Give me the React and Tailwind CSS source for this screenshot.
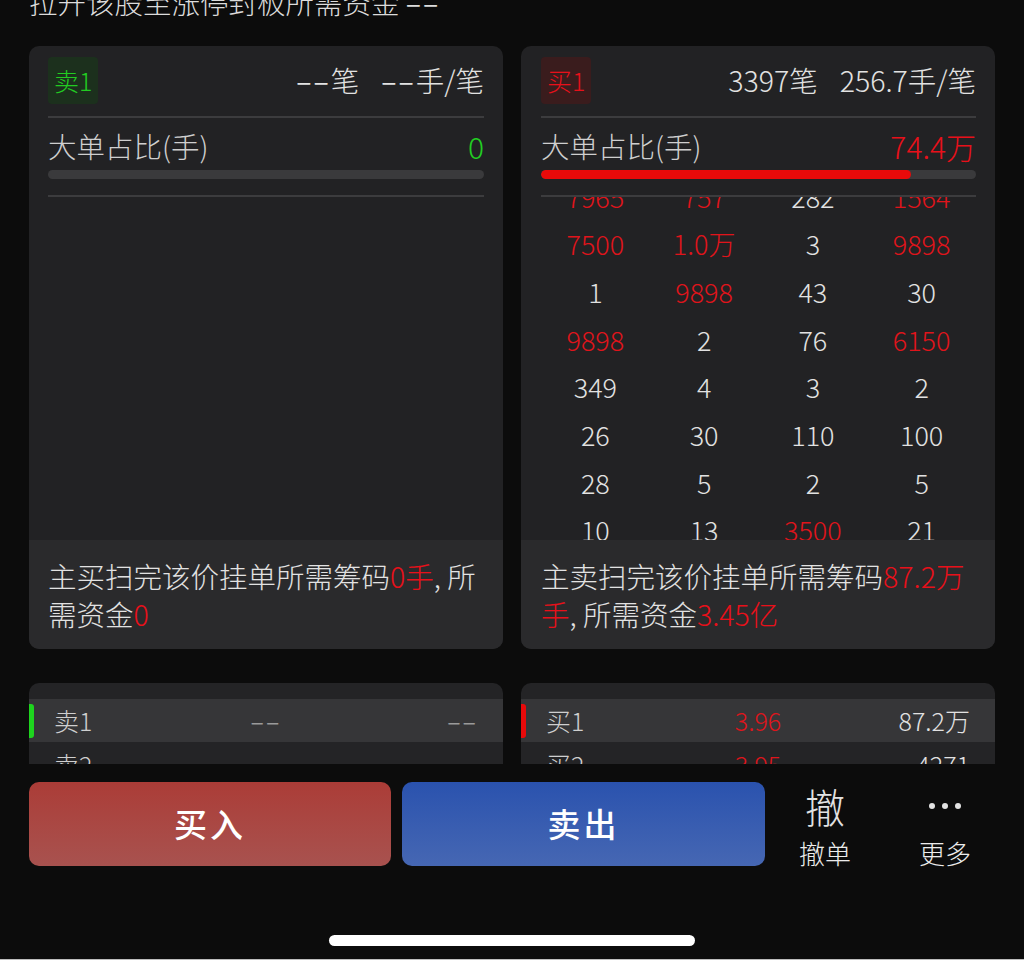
const rows = [
  [["7965", 1], ["757", 1], ["282", 0], ["1564", 1]],
  [["7500", 1], ["1.0万", 1], ["3", 0], ["9898", 1]],
  [["1", 0], ["9898", 1], ["43", 0], ["30", 0]],
  [["9898", 1], ["2", 0], ["76", 0], ["6150", 1]],
  [["349", 0], ["4", 0], ["3", 0], ["2", 0]],
  [["26", 0], ["30", 0], ["110", 0], ["100", 0]],
  [["28", 0], ["5", 0], ["2", 0], ["5", 0]],
  [["10", 0], ["13", 0], ["3500", 1], ["21", 0]],
];

function Dash() {
  return <span className="tracking-[2px] font-normal">––</span>;
}

function Card({ side }) {
  const isBuy = side === "buy";
  return (
    <div className="w-[474px] h-[603px] rounded-[10px] bg-[#222224] overflow-hidden flex flex-col">
      <div className={`flex flex-col flex-1 min-h-0 ${isBuy ? "pl-[20px] pr-[19px]" : "px-[19px]"}`}>
        <div className="pt-[11px] flex items-center justify-between">
          {isBuy ? (
            <div className="h-[47px] px-[6px] rounded-[4px] bg-[#3a1c1d] text-[#e8101a] text-[25px] flex items-center">买1</div>
          ) : (
            <div className="h-[47px] px-[6px] rounded-[4px] bg-[#1c301d] text-[#22cc22] text-[25px] flex items-center">卖1</div>
          )}
          <div className="text-[28.5px] flex gap-[22px] text-[#e2e2e2]">
            {isBuy ? (
              <>
                <span>3397笔</span>
                <span>256.7手/笔</span>
              </>
            ) : (
              <>
                <span><Dash />笔</span>
                <span><Dash />手/笔</span>
              </>
            )}
          </div>
        </div>
        <div className="mt-[12px] h-[2px] bg-[#3c3c3e]" />
        <div className="mt-[14px] flex justify-between items-center leading-[28px]">
          <span className="text-[28.5px] text-[#cfcfcf]">大单占比(手)</span>
          {isBuy ? (
            <span className="text-[30px] text-[#e8101a]">74.4万</span>
          ) : (
            <span className="text-[30px] text-[#22d022]">0</span>
          )}
        </div>
        <div className="mt-[10px] h-[9px] rounded-full bg-[#3a3a3c] overflow-hidden">
          {isBuy && <div className="h-full w-[85%] rounded-full bg-[#e80a0a]" />}
        </div>
        <div className="mt-[16px] h-[2px] bg-[#3c3c3e]" />
        <div className="flex-1 min-h-0 overflow-hidden">
          {isBuy && (
            <div className="-mt-[24px]">
              {rows.map((r, i) => (
                <div key={i} className="h-[47.7px] grid grid-cols-4 items-center text-center text-[27px]">
                  {r.map(([v, red], j) => (
                    <span key={j} className={red ? "text-[#e0141b]" : "text-[#e2e2e2]"}>{v}</span>
                  ))}
                </div>
              ))}
            </div>
          )}
        </div>
      </div>
      <div className={`h-[109px] shrink-0 bg-[#2a2a2c] pt-[17px] text-[28.5px] leading-[38px] text-[#e2e2e2] whitespace-nowrap ${isBuy ? "pl-[20px] pr-[19px]" : "px-[19px]"}`}>
        {isBuy ? (
          <>
            <div>主卖扫完该价挂单所需筹码<span className="text-[#e8101a]">87.2万</span></div>
            <div><span className="text-[#e8101a]">手</span>, 所需资金<span className="text-[#e8101a]">3.45亿</span></div>
          </>
        ) : (
          <>
            <div>主买扫完该价挂单所需筹码<span className="text-[#e8101a]">0手</span>, 所</div>
            <div>需资金<span className="text-[#e8101a]">0</span></div>
          </>
        )}
      </div>
    </div>
  );
}

function BookCard({ side }) {
  const isBuy = side === "buy";
  return (
    <div className="w-[474px] h-[140px] rounded-t-[10px] bg-[#242426] overflow-hidden">
      <div className="h-[16px]" />
      <div className="relative h-[43px] bg-[#363638] grid grid-cols-3 items-center px-[25px] text-[25px]">
        <div className={`absolute left-0 top-[5px] w-[5px] h-[34px] rounded-r-[3px] ${isBuy ? "bg-[#e80a0a]" : "bg-[#1ed41e]"}`} />
        <span className="text-[#cfcfcf]">{isBuy ? "买1" : "卖1"}</span>
        <span className={`text-center ${isBuy ? "text-[#e0141b]" : "text-[#9a9a9a]"}`}>{isBuy ? "3.96" : <Dash />}</span>
        <span className={`text-right ${isBuy ? "text-[#e2e2e2]" : "text-[#9a9a9a]"}`}>{isBuy ? "87.2万" : <Dash />}</span>
      </div>
      <div className="h-[45px] grid grid-cols-3 items-center px-[25px] text-[25px]">
        <span className="text-[#cfcfcf]">{isBuy ? "买2" : "卖2"}</span>
        <span className={`text-center ${isBuy ? "text-[#e0141b]" : "text-[#9a9a9a]"}`}>{isBuy ? "3.95" : ""}</span>
        <span className="text-right text-[#e2e2e2]">{isBuy ? "4271" : ""}</span>
      </div>
    </div>
  );
}

export default function App() {
  return (
    <div className="w-[1024px] h-[960px] overflow-hidden bg-[#0c0c0c] flex flex-col text-[#e2e2e2] font-light font-['Noto_Sans_CJK_SC',sans-serif]">
      <div className="h-[764px] shrink-0 overflow-hidden flex flex-col">
        <div className="-mt-[13px] h-[59px] shrink-0 px-[29px] text-[28.5px] leading-[30px] whitespace-nowrap text-[#dcdcdc]">
          拉开该股至涨停封板所需资金 <Dash />
        </div>
        <div className="flex gap-[18px] px-[29px] shrink-0">
          <Card side="sell" />
          <Card side="buy" />
        </div>
        <div className="mt-[34px] flex gap-[18px] px-[29px] shrink-0">
          <BookCard side="sell" />
          <BookCard side="buy" />
        </div>
      </div>
      <div className="flex-1 flex flex-col">
        <div className="pt-[18px] pl-[29px] flex">
          <div className="w-[362px] h-[84px] rounded-[10px] bg-gradient-to-b from-[#ab3c37] to-[#a8524f] flex items-center justify-center text-white text-[33px] font-medium tracking-[3px]">
            买入
          </div>
          <div className="ml-[11px] w-[363px] h-[84px] rounded-[10px] bg-gradient-to-b from-[#2a52ae] to-[#4667b3] flex items-center justify-center text-white text-[33px] font-medium tracking-[3px]">
            卖出
          </div>
          <div className="w-[120px] flex flex-col items-center">
            <div className="mt-[2px] h-[44px] text-[40px] leading-[44px] text-[#e2e2e2]">撤</div>
            <div className="mt-[10px] text-[26px] leading-[30px] text-[#ececec]">撤单</div>
          </div>
          <div className="w-[120px] flex flex-col items-center">
            <div className="mt-[2px] h-[44px] flex items-center gap-[7px]">
              <span className="w-[6px] h-[6px] rounded-full bg-[#e2e2e2]" />
              <span className="w-[6px] h-[6px] rounded-full bg-[#e2e2e2]" />
              <span className="w-[6px] h-[6px] rounded-full bg-[#e2e2e2]" />
            </div>
            <div className="mt-[10px] text-[26px] leading-[30px] text-[#ececec]">更多</div>
          </div>
        </div>
        <div className="mt-[67px] flex justify-center">
          <div className="w-[366px] h-[11px] rounded-full bg-white" />
        </div>
        <div className="mt-auto h-[1px] bg-[#bdbdbd]" />
      </div>
    </div>
  );
}
